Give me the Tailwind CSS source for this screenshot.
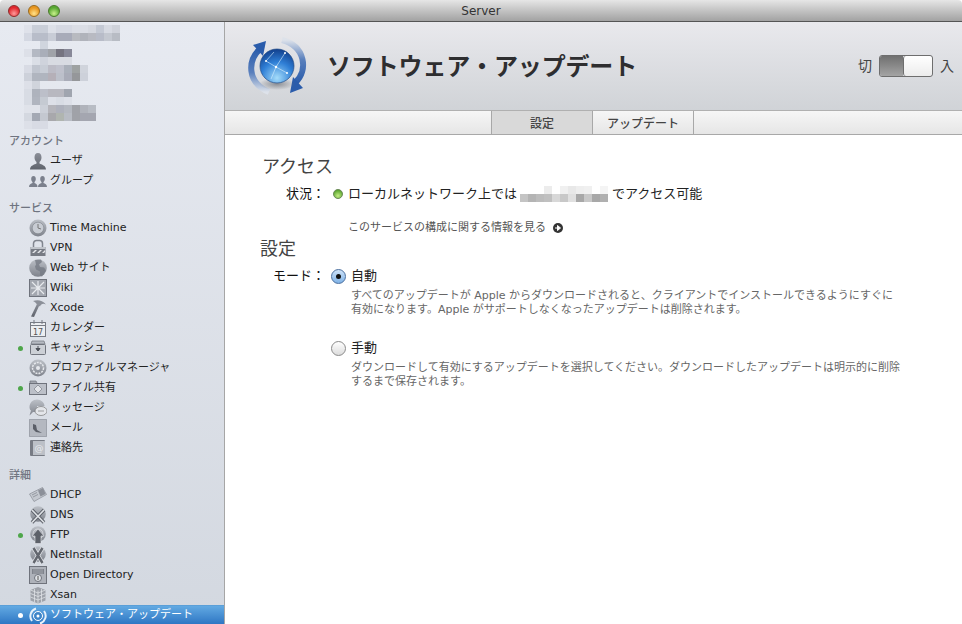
<!DOCTYPE html>
<html lang="ja">
<head>
<meta charset="UTF-8" />
<title>Server</title>
<script src="https://cdn.jsdelivr.net/npm/@tailwindcss/browser@4"></script>
</head>
<body class="w-[962px] h-[624px] overflow-hidden bg-white font-['DejaVu_Sans','Noto_Sans_CJK_JP',sans-serif] text-[11px] text-[#222]">

<svg class="absolute w-0 h-0"><defs>
  <linearGradient id="metal" x1="0" y1="0" x2="0" y2="1"><stop offset="0" stop-color="#bcc0c7"/><stop offset="1" stop-color="#7f838c"/></linearGradient>
  <linearGradient id="metalDark" x1="0" y1="0" x2="0" y2="1"><stop offset="0" stop-color="#8b8f98"/><stop offset="1" stop-color="#5f636c"/></linearGradient>
</defs></svg>

<!-- Title bar -->
<header class="relative h-[22px] flex items-center justify-center rounded-t-[4px] border-b border-[#555] bg-gradient-to-b from-[#e6e6e6] to-[#a2a2a2] text-[12px] text-[#333]">
  <div class="absolute left-[8px] top-[5px] flex gap-[8px]">
    <span class="w-[12px] h-[12px] rounded-full border border-[#8f2a2a] bg-[radial-gradient(circle_at_50%_75%,#ff9a9a,#e0262c_65%)]"></span>
    <span class="w-[12px] h-[12px] rounded-full border border-[#9a6a1c] bg-[radial-gradient(circle_at_50%_75%,#ffe28a,#e8951e_65%)]"></span>
    <span class="w-[12px] h-[12px] rounded-full border border-[#4a7a2a] bg-[radial-gradient(circle_at_50%_75%,#c8f08a,#58a832_65%)]"></span>
  </div>
  Server
</header>

<div class="flex h-[602px]">
  <!-- Sidebar -->
  <aside class="w-[225px] shrink-0 flex flex-col border-r border-[#a6a6a6] bg-gradient-to-b from-[#e7eaf1] to-[#d3d8e0]">
    <!-- blurred host names -->
    <svg id="hostMosaic" class="shrink-0 mt-[3px] ml-[24px]" width="96" height="104" shape-rendering="crispEdges"></svg>

    <div class="mt-[6px] h-[14px] pl-[9px] leading-[14px] font-medium text-[#6f7480]">アカウント</div>
    <div class="mt-[2px] flex flex-col">
      <div class="flex items-center h-[20px] pl-[29px] gap-[3px]"><svg width="18" height="18" viewBox="0 0 18 18" fill="url(#metalDark)"><path d="M9 1c2.500 0 3.500 2 3.500 4.500 0 2-1 3.500-2 4.500v1.500c2 1 6.500 2 6.500 6H1c0-4 4.500-5 6.500-6V10c-1-1-2-2.500-2-4.500C5.500 3 6.500 1 9 1z"/></svg>ユーザ</div>
      <div class="flex items-center h-[20px] pl-[29px] gap-[3px]"><svg width="18" height="18" viewBox="0 0 18 18" fill="#7b808c"><path d="M4.500 4c1.500 0 2.300 1.200 2.300 3 0 1.200-.6 2.300-1.300 3v1c1.500.6 3 1.300 3 4H0c0-2.700 2-3.400 3.500-4v-1c-.7-.7-1.300-1.800-1.300-3 0-1.800.8-3 2.300-3z"/><path d="M13.500 4c1.500 0 2.300 1.200 2.300 3 0 1.200-.6 2.300-1.300 3v1c1.500.6 3.500 1.300 3.500 4H9c0-2.700 2-3.400 3.500-4v-1c-.7-.7-1.300-1.800-1.300-3 0-1.800.8-3 2.300-3z"/></svg>グループ</div>
    </div>

    <div class="mt-[11px] h-[14px] pl-[9px] leading-[14px] font-medium text-[#6f7480]">サービス</div>
    <div class="mt-[2px] flex flex-col">
      <div class="flex items-center h-[20px] pl-[29px] gap-[3px]"><svg width="18" height="18" viewBox="0 0 18 18"><circle cx="9" cy="9" r="8.500" fill="url(#metal)"/><circle cx="9" cy="9" r="5.800" fill="#c8ccd3" stroke="#80848c" stroke-width=".6"/><path d="M9 5v4l3 1" fill="none" stroke="#777" stroke-width="1"/></svg>Time Machine</div>
      <div class="flex items-center h-[20px] pl-[29px] gap-[3px]"><svg width="18" height="18" viewBox="0 0 18 18"><path d="M4.500 9V4.500a3 3 0 0 1 3-3h3a3 3 0 0 1 3 3V9" fill="none" stroke="#80858e" stroke-width="1.500"/><rect x="1.500" y="8" width="15" height="9" fill="#777b84"/><rect x="1.500" y="8" width="15" height="2" fill="#c0c4ca"/><path d="M3 14l3-3h2l-3 3zM8 14l3-3h2l-3 3zM13 14l3-3v2l-1 1z" fill="#e4e6ea"/></svg>VPN</div>
      <div class="flex items-center h-[20px] pl-[29px] gap-[3px]"><svg width="18" height="18" viewBox="0 0 18 18"><circle cx="9" cy="9" r="8.800" fill="url(#metal)"/><path d="M6 1l6-.5 1 2.500-3 2.500 1 2.500 4 .5 2 3-4 6-2-1 0-4-4-2-1-3 1-2z" fill="#767b84" opacity=".8"/></svg>Web サイト</div>
      <div class="flex items-center h-[20px] pl-[29px] gap-[3px]"><svg width="18" height="18" viewBox="0 0 18 18"><rect x=".5" y=".5" width="17" height="17" fill="#a3a7af" stroke="#6f737c"/><path d="M3 3l12 12M15 3L3 15M9 2v14M2 9h14" stroke="#e8eaee" stroke-width="1.200"/></svg>Wiki</div>
      <div class="flex items-center h-[20px] pl-[29px] gap-[3px]"><svg width="18" height="18" viewBox="0 0 18 18"><path d="M2 17.500l6-12.500 2.500 1-5.500 12z" fill="url(#metalDark)"/><path d="M4 2c4-1.500 9-1.500 13 3.500-3-1.500-5-.5-6 2L8 5.500C7 4 6 3 4 2z" fill="#8c9099"/></svg>Xcode</div>
      <div class="flex items-center h-[20px] pl-[29px] gap-[3px]"><svg width="18" height="18" viewBox="0 0 18 18"><rect x="1.500" y="3.500" width="15" height="14" fill="#eceef1" stroke="#777b84"/><path d="M1 6.500h16M5 1v4M13 1v4" stroke="#777b84"/><text x="9" y="15.500" font-size="8" text-anchor="middle" fill="#555">17</text></svg>カレンダー</div>
      <div class="relative flex items-center h-[20px] pl-[29px] gap-[3px]"><span class="absolute left-[18px] top-[8px] w-[5px] h-[5px] rounded-full bg-[#4ea64a]"></span><svg width="18" height="18" viewBox="0 0 18 18"><path d="M3 2h12l1 3H2z" fill="#b6bac2" stroke="#71757e" stroke-width=".7"/><rect x="1.500" y="5.500" width="15" height="10" rx="1" fill="#ccd0d6" stroke="#71757e"/><path d="M9 7v4M7 9.500l2 2.500 2-2.500z" stroke="#4c5058" fill="#4c5058"/></svg>キャッシュ</div>
      <div class="flex items-center h-[20px] pl-[29px] gap-[3px]"><svg width="18" height="18" viewBox="0 0 18 18"><circle cx="9" cy="9" r="8.500" fill="url(#metal)"/><circle cx="9" cy="9" r="5.500" fill="none" stroke="#e6e8ec" stroke-width="1.500" stroke-dasharray="2 1"/><circle cx="9" cy="9" r="2" fill="#e6e8ec"/></svg>プロファイルマネージャ</div>
      <div class="relative flex items-center h-[20px] pl-[29px] gap-[3px]"><span class="absolute left-[18px] top-[8px] w-[5px] h-[5px] rounded-full bg-[#4ea64a]"></span><svg width="18" height="18" viewBox="0 0 18 18"><path d="M1 4V2h6l1 2" fill="#a3a7af" stroke="#6f737c" stroke-width=".7"/><rect x=".5" y="4.500" width="17" height="11" fill="#bcc0c8" stroke="#6f737c"/><path d="M9 6l4 4-4 4-4-4z" fill="#e3e5e9" stroke="#7b7f88" stroke-width=".7"/></svg>ファイル共有</div>
      <div class="flex items-center h-[20px] pl-[29px] gap-[3px]"><svg width="18" height="18" viewBox="0 0 18 18"><path d="M.5 8c0-4.500 3.500-7.500 7.500-7.500s7.500 3 7.500 6.500H8v6H4l-3.500 3.500 1.500-5C1 11 .5 9.500.5 8z" fill="url(#metal)"/><ellipse cx="12" cy="12" rx="6" ry="4.500" fill="#e4e6ea" stroke="#777" stroke-width=".7"/><path d="M9.500 12h1M11.500 12h1M13.500 12h1" stroke="#555"/></svg>メッセージ</div>
      <div class="flex items-center h-[20px] pl-[29px] gap-[3px]"><svg width="18" height="18" viewBox="0 0 18 18"><rect x=".5" y=".5" width="17" height="17" fill="#b4b8c0" stroke="#777b84" stroke-dasharray="1 1"/><path d="M4 5l3 1 1 5 5 3-6-1-3-3z" fill="#5b5f68"/></svg>メール</div>
      <div class="flex items-center h-[20px] pl-[29px] gap-[3px]"><svg width="18" height="18" viewBox="0 0 18 18"><rect x="1" y="1" width="15" height="16" rx="1" fill="#777b84"/><rect x="4" y="2" width="12" height="14" fill="#bcc0c7"/><text x="10" y="12" font-size="9" text-anchor="middle" fill="#e8eaee">@</text></svg>連絡先</div>
    </div>

    <div class="mt-[11px] h-[14px] pl-[9px] leading-[14px] font-medium text-[#6f7480]">詳細</div>
    <div class="mt-[2px] flex flex-col">
      <div class="flex items-center h-[20px] pl-[29px] gap-[3px]"><svg width="18" height="18" viewBox="0 0 18 18"><path d="M.5 8l13-6.500 4 7-12.500 7z" fill="#c4c8cf" stroke="#8a8e97" stroke-width=".7"/><path d="M9 4.500l5-2.500 2.500 6-5 2.500z" fill="#8c9099"/><path d="M3 9l5-2.500M4 11l5-2.500" stroke="#80848d" stroke-width=".7"/></svg>DHCP</div>
      <div class="flex items-center h-[20px] pl-[29px] gap-[3px]"><svg width="18" height="18" viewBox="0 0 18 18"><circle cx="9" cy="8" r="7.800" fill="url(#metal)"/><path d="M3 16.500L15 4M3 4l12 12.500" stroke="#5f636c" stroke-width="3.500"/><path d="M3 16.500L15 4M3 4l12 12.500" stroke="#dfe2e6" stroke-width="1.600"/></svg>DNS</div>
      <div class="relative flex items-center h-[20px] pl-[29px] gap-[3px]"><span class="absolute left-[18px] top-[8px] w-[5px] h-[5px] rounded-full bg-[#4ea64a]"></span><svg width="18" height="18" viewBox="0 0 18 18"><circle cx="9" cy="8" r="7.800" fill="url(#metal)"/><circle cx="9" cy="8" r="5" fill="none" stroke="#e8eaee" stroke-width=".7"/><path d="M9 3l6 7h-3v7.500H6V10H3z" fill="#5d6169" stroke="#e8eaee" stroke-width=".6"/></svg>FTP</div>
      <div class="flex items-center h-[20px] pl-[29px] gap-[3px]"><svg width="18" height="18" viewBox="0 0 18 18"><circle cx="9" cy="8" r="7.800" fill="url(#metal)"/><path d="M4.500 2l9 15M13.500 2l-9 15" stroke="#e8eaee" stroke-width="4"/><path d="M4.500 2l9 15M13.500 2l-9 15" stroke="#63676f" stroke-width="2.500"/></svg>NetInstall</div>
      <div class="flex items-center h-[20px] pl-[29px] gap-[3px]"><svg width="18" height="18" viewBox="0 0 18 18"><rect x=".5" y=".5" width="17" height="17" fill="#aeb2ba" stroke="#6f737c"/><rect x="3" y="3" width="12" height="5" fill="#7f838c"/><path d="M5 3v5M7 3v5M9 3v5M11 3v5M13 3v5" stroke="#b8bcc3" stroke-width=".6"/><circle cx="9" cy="12" r="3.500" fill="#dfe2e6" stroke="#6f737c"/><path d="M9 10v4" stroke="#555"/></svg>Open Directory</div>
      <div class="flex items-center h-[20px] pl-[29px] gap-[3px]"><svg width="18" height="18" viewBox="0 0 18 18"><path d="M9 1l7.500 3v10.500L9 17.500l-7.500-3V4z" fill="#9ea2aa"/><path d="M1.500 7.500l7.500 3 7.500-3M1.500 11l7.500 3 7.500-3M9 4.500v13M1.500 4L9 7l7.500-3M5.500 3v13M12.500 3v13" fill="none" stroke="#e0e2e6" stroke-width=".8"/></svg>Xsan</div>
      <div class="relative flex items-center h-[20px] pl-[29px] gap-[3px] border-t border-[#5a9fd8] bg-gradient-to-b from-[#62a9e2] to-[#2b74c2] text-white"><span class="absolute left-[18px] top-[7px] w-[5px] h-[5px] rounded-full bg-white"></span><svg width="18" height="18" viewBox="0 0 18 18"><circle cx="9" cy="9" r="4.500" fill="#3f86c9" stroke="#fff"/><circle cx="9" cy="9" r="1.500" fill="#fff"/><path d="M3 14A8 8 0 0 1 7 1.500M15 4a8 8 0 0 1-4 12.500" fill="none" stroke="#e8f2fb" stroke-width="2"/></svg>ソフトウェア・アップデート</div>
    </div>
  </aside>

  <!-- Main -->
  <main class="flex-1 min-w-0 flex flex-col">
    <div class="h-[89px] shrink-0 flex items-center pl-[20px] pr-[8px] border-b border-[#b0b0b0] bg-gradient-to-b from-[#e9e9ed] to-[#d0d3d7]">
      <svg class="shrink-0" width="64" height="60" viewBox="0 0 64 60">
        <defs>
          <radialGradient id="globe" cx="50%" cy="85%" r="85%"><stop offset="0" stop-color="#a4dcfa"/><stop offset=".55" stop-color="#2f7fd6"/><stop offset="1" stop-color="#123f8c"/></radialGradient>
          <linearGradient id="ringa" x1="0" y1="0" x2="0" y2="1"><stop offset="0" stop-color="#2a5cab"/><stop offset=".55" stop-color="#5a80bd"/><stop offset="1" stop-color="#dde2ea"/></linearGradient>
          <linearGradient id="ringb" x1="0" y1="1" x2="0" y2="0"><stop offset="0" stop-color="#2a5cab"/><stop offset=".55" stop-color="#5a80bd"/><stop offset="1" stop-color="#dde2ea"/></linearGradient>
          <radialGradient id="globeShadow"><stop offset="0" stop-color="#6c6f75" stop-opacity=".7"/><stop offset="1" stop-color="#6c6f75" stop-opacity="0"/></radialGradient>
        </defs>
        <path d="M15 13C3 24 1 46 24 56" fill="none" stroke="url(#ringa)" stroke-width="6"/>
        <path d="M8 9l13-4-3 15z" fill="#2a5cab"/>
        <path d="M50 47C64 34 60 10 37 4" fill="none" stroke="url(#ringb)" stroke-width="6"/>
        <path d="M58 52l-13 5 3-16z" fill="#2a5cab"/>
        <ellipse cx="32" cy="48" rx="18" ry="6" fill="url(#globeShadow)"/>
        <circle cx="32" cy="30" r="17" fill="url(#globe)" stroke="#234c86" stroke-width=".7"/>
        <path d="M21 25l10 6 9-14M31 31l-5 12M31 31l11 6M21 25l8-9" fill="none" stroke="#d8f0ff" stroke-width=".6"/>
        <circle cx="31" cy="31" r="1.200" fill="#fff"/><circle cx="40" cy="17" r="1" fill="#fff"/><circle cx="21" cy="25" r="1" fill="#fff"/><circle cx="42" cy="37" r="1" fill="#fff"/>
      </svg>
      <h1 class="ml-[18px] mt-[2px] text-[24px] font-bold tracking-[-0.15px] text-[#2e2e30]">ソフトウェア・アップデート</h1>
      <div class="ml-auto flex items-center text-[14px] text-[#444]">
        <span class="mr-[7px]">切</span>
        <div class="flex w-[54px] h-[22px] rounded-[3px] border border-[#6e6e6e] overflow-hidden">
          <span class="w-[23px] bg-gradient-to-b from-[#707070] to-[#a4a4a4]"></span>
          <span class="flex-1 rounded-[3px] border-l border-[#6e6e6e] bg-gradient-to-b from-[#ffffff] to-[#ececec]"></span>
        </div>
        <span class="ml-[7px]">入</span>
      </div>
    </div>

    <nav class="h-[24px] shrink-0 flex justify-start pl-[266px] border-b border-[#a8a8a8] bg-gradient-to-b from-[#f6f6f6] to-[#e6e6e6] text-[12px] font-medium text-[#444]">
      <div class="w-[102px] pt-[2px] flex items-center justify-center border-x border-[#a8a8a8] bg-[#d9d9d9]">設定</div>
      <div class="w-[101px] pt-[2px] flex items-center justify-center border-r border-[#a8a8a8]">アップデート</div>
    </nav>

    <div class="flex-1 flex flex-col">
      <h2 class="mt-[21px] ml-[37px] text-[18px] leading-[22px] text-[#444]">アクセス</h2>
      <div class="mt-[6px] flex items-center h-[20px] text-[13px]">
        <span class="w-[100px] text-right text-[#111]">状況：</span>
        <svg class="ml-[7px]" width="12" height="12" viewBox="0 0 12 12"><defs><radialGradient id="led" cx="50%" cy="70%" r="60%"><stop offset="0" stop-color="#c4ec84"/><stop offset="1" stop-color="#5aa62e"/></radialGradient></defs><circle cx="6" cy="6" r="4.500" fill="url(#led)" stroke="#6d8a5a"/></svg>
        <span class="ml-[4px]">ローカルネットワーク上では</span>
        <svg id="addrMosaic" class="mx-[3px]" width="89" height="16" shape-rendering="crispEdges"></svg>
        <span>でアクセス可能</span>
      </div>
      <div class="mt-[14px] ml-[123px] flex items-center h-[20px] text-[#555]">
        このサービスの構成に関する情報を見る
        <svg class="ml-[6px]" width="12" height="12" viewBox="0 0 12 12"><circle cx="6" cy="6" r="5" fill="#333"/><path d="M3 6h4M5.500 3.500L8.500 6l-3 2.500z" stroke="#fff" fill="#fff"/></svg>
      </div>
      <h2 class="ml-[35px] text-[18px] leading-[22px] text-[#444]">設定</h2>
      <div class="mt-[6px] flex items-center h-[20px] text-[13px]">
        <span class="w-[100px] text-right text-[#111]">モード：</span>
        <span class="ml-[6px] flex w-[15px] h-[15px] items-center justify-center rounded-full border border-[#4a6f9f] bg-gradient-to-b from-[#cfe3f8] to-[#7fb2e6]"><span class="w-[5px] h-[5px] rounded-full bg-[#111]"></span></span>
        <span class="ml-[5px]">自動</span>
      </div>
      <p class="mt-[3px] ml-[126px] w-[550px] leading-[14px] text-[#666]">すべてのアップデートが Apple からダウンロードされると、クライアントでインストールできるようにすぐに有効になります。Apple がサポートしなくなったアップデートは削除されます。</p>
      <div class="mt-[21px] flex items-center h-[20px] text-[13px]">
        <span class="ml-[106px] w-[15px] h-[15px] rounded-full border border-[#8a8a8a] bg-gradient-to-b from-[#ffffff] to-[#dcdcdc]"></span>
        <span class="ml-[5px]">手動</span>
      </div>
      <p class="mt-[3px] ml-[126px] w-[555px] leading-[14px] text-[#666]">ダウンロードして有効にするアップデートを選択してください。ダウンロードしたアップデートは明示的に削除するまで保存されます。</p>
    </div>
  </main>
</div>

<script>
  // the pixelated parts of the screenshot, one string per row of 8px cells
  function mosaic(id, rows) {
    var svg = document.getElementById(id);
    var out = '';
    rows.forEach(function (row, y) {
      row.split(' ').forEach(function (c, x) {
        if (c !== '-') out += '<rect x="' + x * 8 + '" y="' + y * 8 + '" width="8" height="8" fill="#' + c + '"/>';
      });
    });
    svg.innerHTML = out;
  }
  mosaic('hostMosaic', [
    'dfe2ea c9ced8 c9ced8 dde0e8 d5d8e2 d5d8e2 dadde5 dadde5 d5d8e0 c4c9d4 d7dae2 cfd2da',
    'd4d8e2 b8bdc9 b8bdc9 c8ccd6 a8abb9 a8abb9 b8bac0 b0b3bb b8bac2 b8bcc8 c4c8d0 b8bcc4',
    '- - d0d5de',
    'dde0e8 b4b9c3 a9aeb9 a0a3a9 757480 878898',
    '- dadee6 cfd3dc d8dbe2 d8dbe2 d8dbe2',
    'd8dbe4 c0c5cf c8cdd6 bcbcc6 bfc1cc aab0ba 9ea2a2 d0d4dc',
    'cdd1da b0b5bf b0b5bf b5b0b8 bcc0ca a9acb8 95979a cdd1da',
    'dde0e8 d0d4dc',
    'd8dce4 aeb3bd bcbfc9 b8b8c0 b8b8c0 a0a5af',
    'd8dce4 b0b5bf c5cad2 dde0e8 d8dce4 dde0e8',
    'e0e3ea e0e3ea ccd0d8 b5b5bb aeb1bc b4b8c0 a0a2a8 b0b3bb b8bcc4',
    'd4d8e0 a4a9b4 c4c8d0 a8a8ac b0b5b0 b8bcc4 a0a2a8 a4a6b0 a4a6b0',
    'dde0e8 d8dbe4 d8dbe4'
  ]);
  mosaic('addrMosaic', [
    'ffffff ffffff ffffff ececec ffffff f0f0f0 e8e8e8 eeeeee f0f0f0 ffffff f4f4f4',
    'c4c4c4 b4b4b4 bcbcbc c0c0c0 d8d8d8 c8c8c8 e0e0e0 a8a8a8 c8c8c8 a8a8a8 b0b0b0'
  ]);
</script>
</body>
</html>
